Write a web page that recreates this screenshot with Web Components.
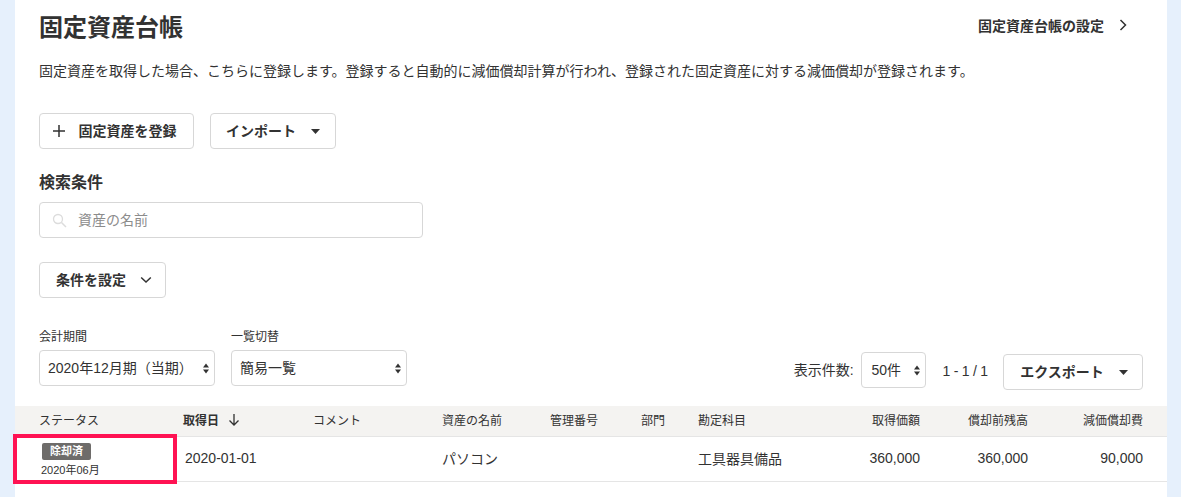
<!DOCTYPE html>
<html lang="ja">
<head>
<meta charset="utf-8">
<title>固定資産台帳</title>
<style>
    html, body { margin: 0; height: 497px; overflow: hidden; }
    body {
        background: #e6f0fc;
        color: #323232;
        font-family: "Liberation Sans", "Noto Sans CJK JP", sans-serif;
    }
</style>
</head>
<body>
<ledger-page>
    <ledger-header slot="header" title-text="固定資産台帳" link="固定資産台帳の設定"></ledger-header>
    <p slot="desc" style="margin:0">固定資産を取得した場合、こちらに登録します。登録すると自動的に減価償却計算が行われ、登録された固定資産に対する減価償却が登録されます。</p>

    <div slot="actions" style="display:flex;gap:16px">
        <ui-button icon="plus" style="--w:155px;--pr:5px">固定資産を登録</ui-button>
        <ui-button icon="caret" style="--w:126px">インポート</ui-button>
    </div>

    <search-box slot="search" heading="検索条件" placeholder="資産の名前"></search-box>

    <ui-button slot="filter" icon="chevron" style="--w:127px;--pl:3px;--gap:14px">条件を設定</ui-button>

    <div slot="left-tools" style="display:flex;gap:16px">
        <labeled-select label="会計期間" value="2020年12月期（当期）" style="--w:176px"></labeled-select>
        <labeled-select label="一覧切替" value="簡易一覧" style="--w:176px"></labeled-select>
    </div>

    <div slot="right-tools" style="display:flex;align-items:flex-end;font-size:14px;margin-top:24px">
        <span style="margin-bottom:11px;margin-right:7px">表示件数:</span>
        <ui-select value="50件" style="--w:65px;margin-bottom:2px;--pad:10px"></ui-select>
        <span style="margin:0 15px 11px 17px;word-spacing:-0.5px">1 - 1 / 1</span>
        <ui-button icon="caret" style="--w:140px;--pl:2px">エクスポート</ui-button>
    </div>

    <ledger-table slot="table"></ledger-table>
</ledger-page>

<script>
const ICONS = {
    plus: '<svg width="14" height="14" viewBox="0 0 14 14"><path d="M7 1v12M1 7h12" stroke="#323232" stroke-width="1.5" fill="none"/></svg>',
    caret: '<svg width="9" height="5" viewBox="0 0 9 5"><path d="M0 0h9L4.500 5z" fill="#323232"/></svg>',
    chevron: '<svg width="12" height="8" viewBox="0 0 12 8"><path d="M1.200 1.500L6 6l4.800-4.500" stroke="#323232" stroke-width="1.500" fill="none"/></svg>',
    right: '<svg width="8" height="12" viewBox="0 0 8 12"><path d="M1.500 1L6.500 6l-5 5" stroke="#323232" stroke-width="1.500" fill="none"/></svg>',
    down: '<svg width="12" height="13" viewBox="0 0 12 13"><path d="M6 1v11M1.500 7.500L6 12l4.500-4.500" stroke="#323232" stroke-width="1.300" fill="none"/></svg>',
    search: '<svg width="15" height="15" viewBox="0 0 15 15"><circle cx="6" cy="6" r="4.500" stroke="#dcdcdc" stroke-width="1.300" fill="none"/><path d="M9.500 9.500L14 14" stroke="#dcdcdc" stroke-width="1.500" fill="none"/></svg>',
    updown: '<svg width="6" height="11" viewBox="0 0 6 11"><path d="M3 0.500L6 4.500H0zM3 10.500L0 6.500h6z" fill="#323232"/></svg>'
};

class LedgerPage extends HTMLElement {
    constructor() {
        super();
        const shadow = this.attachShadow({ mode: 'open' });
        shadow.innerHTML = `
            <style>
                :host { display: block; margin: 0 14px 0 15px; background: #fff; height: 497px; position: relative; }
                .top { padding: 0 24px; }
                .desc { font-size: 14px; line-height: 20px; margin-top: 6px; white-space: nowrap; }
                .actions { margin-top: 32px; }
                .search { margin-top: 22px; }
                .filter { margin-top: 24px; }
                .tools { display: flex; justify-content: space-between; align-items: flex-start; margin-top: 30px; }
                .table { margin-top: 16px; }
            </style>
            <div class="top">
                <slot name="header"></slot>
                <div class="desc"><slot name="desc"></slot></div>
                <div class="actions"><slot name="actions"></slot></div>
                <div class="search"><slot name="search"></slot></div>
                <div class="filter"><slot name="filter"></slot></div>
                <div class="tools"><slot name="left-tools"></slot><slot name="right-tools"></slot></div>
            </div>
            <div class="table"><slot name="table"></slot></div>
        `;
    }
}

class LedgerHeader extends HTMLElement {
    constructor() {
        super();
        const shadow = this.attachShadow({ mode: 'open' });
        shadow.innerHTML = `
            <style>
                :host { display: flex; justify-content: space-between; align-items: center; height: 55px; }
                h1 { margin: 0; font-size: 24px; font-weight: 700; line-height: 55px; }
                a { display: flex; align-items: center; gap: 15px; font-size: 14px; font-weight: 700; padding: 0 16px 6px 0; }
            </style>
            <h1>${this.getAttribute('title-text')}</h1>
            <a>${this.getAttribute('link')}${ICONS.right}</a>
        `;
    }
}

class UiButton extends HTMLElement {
    constructor() {
        super();
        const shadow = this.attachShadow({ mode: 'open' });
        const icon = this.getAttribute('icon');
        const leading = icon === 'plus';
        shadow.innerHTML = `
            <style>
                :host { display: block; width: var(--w); flex: none; }
                button {
                    display: flex; align-items: center; justify-content: center;
                    gap: var(--gap, ${leading ? 13 : 15}px);
                    box-sizing: border-box; width: 100%; height: 36px;
                    padding: 0 var(--pr, 0) 0 var(--pl, 0);
                    background: #fff; color: #323232;
                    border: 1px solid #d7d7d7; border-radius: 4px;
                    font: 700 14px "Liberation Sans", "Noto Sans CJK JP", sans-serif;
                }
                span { padding-bottom: 2px; }
                svg { display: block; }
            </style>
            <button>
                ${leading ? ICONS[icon] : ''}
                <span><slot></slot></span>
                ${leading ? '' : ICONS[icon]}
            </button>
        `;
    }
}

class SearchBox extends HTMLElement {
    constructor() {
        super();
        const shadow = this.attachShadow({ mode: 'open' });
        shadow.innerHTML = `
            <style>
                :host { display: block; }
                h2 { margin: 0 0 7px; font-size: 16px; font-weight: 700; line-height: 24px; }
                .box {
                    display: flex; align-items: center; gap: 11px;
                    box-sizing: border-box; width: 384px; height: 36px; padding: 0 12px;
                    border: 1px solid #d7d7d7; border-radius: 4px;
                    font-size: 14px; color: #8c8c8c;
                }
                span { padding-bottom: 2px; }
                svg { display: block; }
            </style>
            <h2>${this.getAttribute('heading')}</h2>
            <div class="box">${ICONS.search}<span>${this.getAttribute('placeholder')}</span></div>
        `;
    }
}

class UiSelect extends HTMLElement {
    constructor() {
        super();
        const shadow = this.attachShadow({ mode: 'open' });
        shadow.innerHTML = `
            <style>
                :host { display: block; width: var(--w); flex: none; }
                .sel {
                    display: flex; align-items: center; justify-content: space-between;
                    box-sizing: border-box; height: 36px; padding: 0 5px 0 var(--pad, 8px);
                    border: 1px solid #d7d7d7; border-radius: 4px;
                    background: #fff; font-size: 14px; white-space: nowrap;
                }
                span { padding-bottom: 2px; }
                svg { display: block; flex: none; }
            </style>
            <div class="sel"><span>${this.getAttribute('value')}</span>${ICONS.updown}</div>
        `;
    }
}

class LabeledSelect extends HTMLElement {
    constructor() {
        super();
        const shadow = this.attachShadow({ mode: 'open' });
        shadow.innerHTML = `
            <style>
                :host { display: block; }
                label { display: block; font-size: 12px; line-height: 18px; margin-bottom: 4px; }
            </style>
            <label>${this.getAttribute('label')}</label>
            <ui-select value="${this.getAttribute('value')}"></ui-select>
        `;
    }
}

const GRID = `
    display: grid;
    grid-template-columns: 144px 130px 129px 108px 91px 57px 100px 122px 108px 115px;
    align-items: center;
`;

class LedgerTable extends HTMLElement {
    constructor() {
        super();
        const shadow = this.attachShadow({ mode: 'open' });
        shadow.innerHTML = `
            <style>
                :host { display: block; }
                .head, .row { ${GRID} box-sizing: border-box; border-bottom: 1px solid #e5e5e5; }
                .head { height: 31px; background: #f4f3f1; font-size: 12px; padding: 0 24px 3px; }
                .row { height: 45px; font-size: 14px; padding: 0 24px 2px; }
                .r { text-align: right; }
                .sort { display: flex; align-items: center; gap: 9px; font-weight: 700; }
                .date { padding-left: 2px; }
                status-cell { margin-top: 3px; }
                .mark {
                    position: absolute; box-sizing: border-box;
                    left: -2px; top: 434px; width: 164px; height: 50px;
                    border: 4px solid #ff1253;
                }
            </style>
            <div class="head">
                <span style="margin-top:-1px">ステータス</span>
                <span class="sort">取得日 ${ICONS.down}</span>
                <span>コメント</span>
                <span>資産の名前</span>
                <span>管理番号</span>
                <span>部門</span>
                <span>勘定科目</span>
                <span class="r">取得価額</span>
                <span class="r">償却前残高</span>
                <span class="r">減価償却費</span>
            </div>
            <div class="row">
                <status-cell label="除却済" date="2020年06月"></status-cell>
                <span class="date">2020-01-01</span>
                <span></span>
                <span>パソコン</span>
                <span></span>
                <span></span>
                <span>工具器具備品</span>
                <span class="r">360,000</span>
                <span class="r">360,000</span>
                <span class="r">90,000</span>
            </div>
            <div class="mark"></div>
        `;
    }
}

class StatusCell extends HTMLElement {
    constructor() {
        super();
        const shadow = this.attachShadow({ mode: 'open' });
        shadow.innerHTML = `
            <style>
                :host { display: flex; flex-direction: column; align-items: flex-start; padding-left: 2px; }
                b {
                    display: block; background: #6e6c6a; color: #fff;
                    margin-left: 1px; width: 49px; height: 17px; line-height: 16px;
                    border-radius: 2px; text-align: center; font-size: 11px; font-weight: 700;
                }
                span { font-size: 11px; line-height: 14px; margin-top: 2px; position: relative; top: 1px; }
            </style>
            <b>${this.getAttribute('label')}</b>
            <span>${this.getAttribute('date')}</span>
        `;
    }
}

customElements.define('ui-button', UiButton);
customElements.define('ui-select', UiSelect);
customElements.define('labeled-select', LabeledSelect);
customElements.define('search-box', SearchBox);
customElements.define('status-cell', StatusCell);
customElements.define('ledger-table', LedgerTable);
customElements.define('ledger-header', LedgerHeader);
customElements.define('ledger-page', LedgerPage);
</script>
</body>
</html>
